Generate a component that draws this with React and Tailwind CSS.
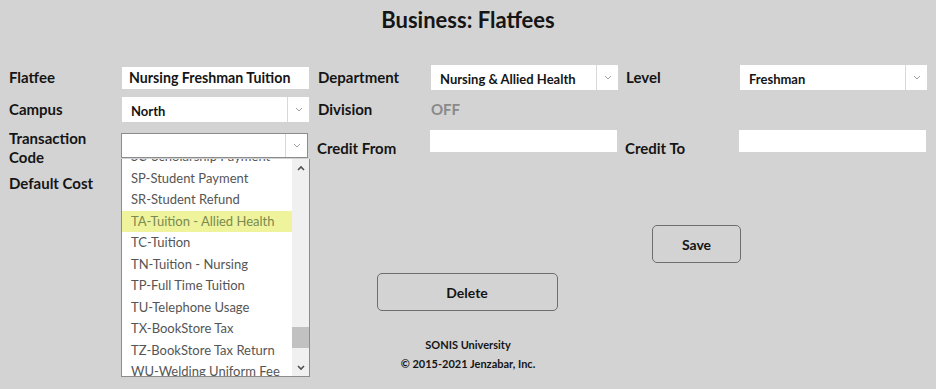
import React from 'react'

const CODES = [
  'SC-Scholarship Payment',
  'SP-Student Payment',
  'SR-Student Refund',
  'TA-Tuition - Allied Health',
  'TC-Tuition',
  'TN-Tuition - Nursing',
  'TP-Full Time Tuition',
  'TU-Telephone Usage',
  'TX-BookStore Tax',
  'TZ-BookStore Tax Return',
  'WU-Welding Uniform Fee',
]

function Chevron({ up, down, className }) {
  let d = 'M1 1l3 3 3-3'
  if (up) d = 'M1 5l3-3 3 3'
  return (
    <svg width="8" height="6" viewBox="0 0 8 6" className={className}>
      <path d={d} fill="none" stroke="currentColor" strokeWidth={down || up ? 1.6 : 1} />
    </svg>
  )
}

function Label({ children, w = 'w-[113px]' }) {
  return <div className={`${w} shrink-0 text-[15px] font-bold leading-[19px]`}>{children}</div>
}

function Select({ value, bordered }) {
  return (
    <div
      className={`w-[187px] h-[25px] bg-white flex items-center shrink-0 ${bordered ? 'border border-[#8c8c8c]' : ''}`}
    >
      <span className="flex-1 pl-[9px] pt-[5px] text-[13px] font-bold">{value}</span>
      <span className="w-[22px] h-full border-l border-[#d8d8d8] flex items-center justify-center text-[#a0a0a0]">
        <Chevron />
      </span>
    </div>
  )
}

function TextBox({ value, h = 'h-[22px]' }) {
  return (
    <div className={`w-[187px] ${h} bg-white shrink-0 flex items-center pl-[7px] text-[14.2px] font-bold`}>
      {value}
    </div>
  )
}

export default function App() {
  return (
    <div className="min-h-screen bg-[#d3d3d3] font-['Lato',sans-serif] text-[#151515]">
      <h1 className="pt-[7px] text-center text-[22px] font-bold leading-[26px]">Business: Flatfees</h1>

      <div className="pl-[9px] pt-[32px]">
        <div className="flex items-center h-[25px]">
          <Label>Flatfee</Label>
          <TextBox value="Nursing Freshman Tuition" />
          <div className="w-[9px]" />
          <Label>Department</Label>
          <Select value="Nursing & Allied Health" />
          <div className="w-[8px]" />
          <Label w="w-[114px]">Level</Label>
          <Select value="Freshman" />
        </div>

        <div className="flex items-center h-[25px] mt-[7px]">
          <Label>Campus</Label>
          <Select value="North" />
          <div className="w-[9px]" />
          <Label>Division</Label>
          <span className="text-[15px] font-bold text-[#8a8a8a]">OFF</span>
        </div>

        <div className="flex items-center mt-[7px] h-[34px]">
          <Label>
            <span className="block pt-[3px]">
              Transaction
              <br />
              Code
            </span>
          </Label>
          <div className="relative -ml-px self-start mt-[4px]">
            <Select bordered />
            <div className="absolute left-0 top-[26px] w-[189px] h-[218px] bg-white border border-[#8c8c8c] border-t-0 overflow-hidden flex z-10">
              <ul className="flex-1 -mt-[13px]">
                {CODES.map((c) => (
                  <li
                    key={c}
                    className={`h-[21.5px] pl-[9px] text-[13px] leading-[21.5px] whitespace-nowrap ${
                      c.startsWith('TA') ? 'bg-[#eef39c] text-[#7a8a50]' : 'text-[#555]'
                    }`}
                  >
                    {c}
                  </li>
                ))}
              </ul>
              <div className="w-[17px] bg-[#f0f0f0] flex flex-col items-center">
                <div className="h-[17px] flex items-center justify-center text-[#505050]">
                  <Chevron up />
                </div>
                <div className="flex-1 w-full pt-[151px]">
                  <div className="h-[21px] w-full bg-[#c1c1c1]" />
                </div>
                <div className="h-[17px] flex items-center justify-center text-[#505050]">
                  <Chevron down />
                </div>
              </div>
            </div>
          </div>
          <div className="w-[9px]" />
          <Label>
            <span className="block pt-[4px]">Credit From</span>
          </Label>
          <div className="self-start mt-[1px]">
            <TextBox />
          </div>
          <div className="w-[8px]" />
          <Label w="w-[114px]">
            <span className="block pt-[4px]">Credit To</span>
          </Label>
          <div className="self-start mt-[1px]">
            <TextBox />
          </div>
        </div>

        <div className="flex items-center mt-[10px] h-[20px]">
          <Label>Default Cost</Label>
        </div>
      </div>

      <div className="pl-[652px] pt-[32px]">
        <button className="w-[89px] h-[38px] rounded-[5px] border border-[#6e6e6e] text-[14px] font-bold">
          Save
        </button>
      </div>
      <div className="flex justify-center pt-[10px] pr-[2px]">
        <button className="w-[181px] h-[38px] rounded-[5px] border border-[#6e6e6e] text-[14px] font-bold">
          Delete
        </button>
      </div>

      <div className="pt-[24px] text-center text-[11px] font-bold leading-[19px]">
        <div>SONIS University</div>
        <div>© 2015-2021 Jenzabar, Inc.</div>
      </div>
    </div>
  )
}
